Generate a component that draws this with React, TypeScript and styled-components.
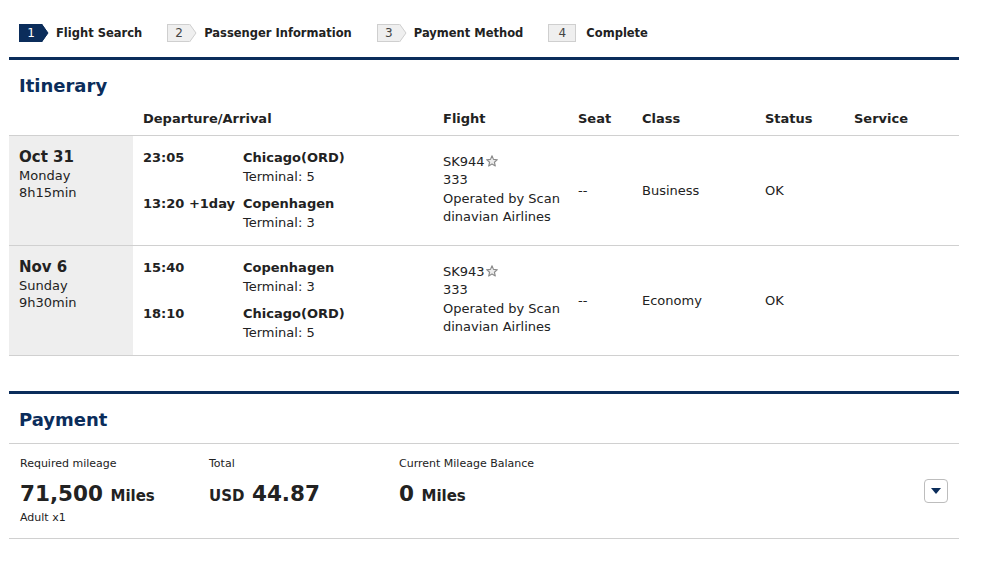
import React from "react";
import styled, { createGlobalStyle } from "styled-components";

const GlobalStyle = createGlobalStyle`
  body {
    margin: 0;
    background: #fff;
    font-family: "DejaVu Sans", "Liberation Sans", sans-serif;
    color: #222;
  }
`;

const Page = styled.div`
  width: 950px;
  margin-left: 9px;
  padding-top: 24px;
`;

const Steps = styled.div`
  display: flex;
  align-items: center;
  padding-left: 10px;
  height: 18px;
  margin-bottom: 15px;
`;

const Step = styled.div`
  display: flex;
  align-items: center;
  margin-right: 25px;
  font-size: 11.5px;
  font-weight: bold;
  color: #222;
`;

const StepNum = styled.div<{ $active?: boolean; $last?: boolean }>`
  position: relative;
  box-sizing: border-box;
  width: ${(p) => (p.$last ? "28px" : "23px")};
  height: 18px;
  display: flex;
  align-items: center;
  justify-content: center;
  font-size: 12px;
  font-weight: normal;
  background: ${(p) => (p.$active ? "#0b2d5b" : "#efefef")};
  color: ${(p) => (p.$active ? "#fff" : "#444")};
  border: 1px solid ${(p) => (p.$active ? "#0b2d5b" : "#cfcfcf")};
  border-right: ${(p) => (p.$last ? undefined : "none")};
  margin-right: ${(p) => (p.$last ? "10px" : "14px")};
`;

const Arrow = styled.svg`
  position: absolute;
  right: -7px;
  top: -1px;
`;

const NavyRule = styled.div`
  height: 3px;
  background: #0b2d5b;
`;

const SectionTitle = styled.h2`
  margin: 0;
  padding: 15px 10px 0;
  height: 40px;
  box-sizing: border-box;
  font-size: 18px;
  font-weight: bold;
  color: #0b2d5b;
`;

const Grid = "124px 10px 100px 200px 135px 64px 123px 89px 1fr";

const HeadRow = styled.div`
  display: grid;
  grid-template-columns: ${Grid};
  height: 36px;
  align-items: center;
  border-bottom: 1px solid #d0d0d0;
  font-size: 13px;
  font-weight: bold;
  padding-top: 2px;
  box-sizing: border-box;
`;

const HeadCell = styled.div<{ $col: number; $span?: number }>`
  grid-column: ${(p) => p.$col} / span ${(p) => p.$span ?? 1};
`;

const Row = styled.div`
  display: grid;
  grid-template-columns: ${Grid};
  height: 109px;
  border-bottom: 1px solid #d0d0d0;
  font-size: 13px;
`;

const DateCell = styled.div`
  background: #eeeeee;
  padding: 11px 10px 0;
  line-height: 17px;
`;

const DateMain = styled.div`
  font-size: 15px;
  font-weight: bold;
  line-height: 20px;
`;

const Segments = styled.div`
  grid-column: 3 / span 2;
  display: flex;
  flex-direction: column;
  gap: 9px;
  padding-top: 13px;
  line-height: 18.5px;
`;

const Segment = styled.div`
  display: grid;
  grid-template-columns: 100px 1fr;
`;

const Bold = styled.div`
  font-weight: bold;
`;

const FlightCell = styled.div`
  grid-column: 5;
  width: 120px;
  word-break: break-all;
  line-height: 18.3px;
  padding-top: 17px;
`;

const MidCell = styled.div<{ $col: number }>`
  grid-column: ${(p) => p.$col};
  align-self: center;
`;

const PaySection = styled.div`
  margin-top: 35px;
`;

const PayTitle = styled(SectionTitle)`
  height: 50px;
  padding-top: 15px;
  border-bottom: 1px solid #d0d0d0;
`;

const PayBody = styled.div`
  display: flex;
  align-items: flex-start;
  height: 95px;
  padding: 13px 11px 0;
  box-sizing: border-box;
  border-bottom: 1px solid #d0d0d0;
`;

const PayCol = styled.div<{ $w: number }>`
  width: ${(p) => p.$w}px;
`;

const Label = styled.div`
  font-size: 11px;
  line-height: 14px;
  margin-bottom: 9px;
`;

const Value = styled.div`
  font-size: 21.5px;
  font-weight: bold;
  line-height: 28px;
`;

const Unit = styled.span`
  font-size: 15px;
`;

const Sub = styled.div`
  font-size: 11px;
  line-height: 14px;
  margin-top: 1px;
`;

const Toggle = styled.button`
  margin-left: auto;
  margin-top: 22px;
  width: 24px;
  height: 24px;
  padding: 0;
  border: 1px solid #bdbdbd;
  border-radius: 4px;
  background: #fff;
  display: flex;
  align-items: center;
  justify-content: center;
`;

const StarIcon = () => (
  <svg width="12" height="12" viewBox="0 0 24 24" style={{ marginLeft: 1, verticalAlign: "-1px" }}>
    <path
      d="M12 1.5l3 7.3 7.8.6-6 5.1 1.9 7.6L12 18l-6.7 4.1 1.9-7.6-6-5.1 7.8-.6z"
      fill="#ececec"
      stroke="#8a8a8a"
      strokeWidth="2.2"
      strokeLinejoin="round"
    />
  </svg>
);

const steps = ["Flight Search", "Passenger Information", "Payment Method", "Complete"];

const itinerary = [
  {
    date: "Oct 31",
    day: "Monday",
    dur: "8h15min",
    segs: [
      { time: "23:05", city: "Chicago(ORD)", term: "Terminal: 5" },
      { time: "13:20 +1day", city: "Copenhagen", term: "Terminal: 3" },
    ],
    flight: "SK944",
    cls: "Business",
  },
  {
    date: "Nov 6",
    day: "Sunday",
    dur: "9h30min",
    segs: [
      { time: "15:40", city: "Copenhagen", term: "Terminal: 3" },
      { time: "18:10", city: "Chicago(ORD)", term: "Terminal: 5" },
    ],
    flight: "SK943",
    cls: "Economy",
  },
];

export default function App() {
  return (
    <>
      <GlobalStyle />
      <Page>
        <Steps>
          {steps.map((s, i) => {
            const last = i === steps.length - 1;
            const active = i === 0;
            return (
              <Step key={s}>
                <StepNum $active={active} $last={last}>
                  {i + 1}
                  {!last && (
                    <Arrow width="8" height="18" viewBox="0 0 8 18">
                      <path
                        d="M0 0 L1 0 L7 9 L1 18 L0 18 Z"
                        fill={active ? "#0b2d5b" : "#efefef"}
                      />
                      <path
                        d="M0.5 0 L7 9 L0.5 18"
                        fill="none"
                        stroke={active ? "#0b2d5b" : "#cfcfcf"}
                        strokeWidth="1"
                      />
                    </Arrow>
                  )}
                </StepNum>
                {s}
              </Step>
            );
          })}
        </Steps>
        <NavyRule />
        <SectionTitle>Itinerary</SectionTitle>
        <HeadRow>
          <HeadCell $col={3} $span={2}>Departure/Arrival</HeadCell>
          <HeadCell $col={5}>Flight</HeadCell>
          <HeadCell $col={6}>Seat</HeadCell>
          <HeadCell $col={7}>Class</HeadCell>
          <HeadCell $col={8}>Status</HeadCell>
          <HeadCell $col={9}>Service</HeadCell>
        </HeadRow>
        {itinerary.map((r) => (
          <Row key={r.flight}>
            <DateCell>
              <DateMain>{r.date}</DateMain>
              <div>{r.day}</div>
              <div>{r.dur}</div>
            </DateCell>
            <Segments>
              {r.segs.map((s) => (
                <Segment key={s.time}>
                  <Bold>{s.time}</Bold>
                  <div>
                    <Bold>{s.city}</Bold>
                    <div>{s.term}</div>
                  </div>
                </Segment>
              ))}
            </Segments>
            <FlightCell>
              <div>
                {r.flight}
                <StarIcon />
              </div>
              <div>333</div>
              <div>Operated by Scandinavian Airlines</div>
            </FlightCell>
            <MidCell $col={6}>--</MidCell>
            <MidCell $col={7}>{r.cls}</MidCell>
            <MidCell $col={8}>OK</MidCell>
          </Row>
        ))}
        <PaySection>
          <NavyRule />
          <PayTitle>Payment</PayTitle>
          <PayBody>
            <PayCol $w={189}>
              <Label>Required mileage</Label>
              <Value>
                71,500 <Unit>Miles</Unit>
              </Value>
              <Sub>Adult x1</Sub>
            </PayCol>
            <PayCol $w={190}>
              <Label>Total</Label>
              <Value>
                <Unit>USD</Unit> 44.87
              </Value>
            </PayCol>
            <PayCol $w={200}>
              <Label>Current Mileage Balance</Label>
              <Value>
                0 <Unit>Miles</Unit>
              </Value>
            </PayCol>
            <Toggle aria-label="expand">
              <svg width="10" height="6" viewBox="0 0 10 6">
                <path d="M0 0 H10 L5 6 Z" fill="#0b2d5b" />
              </svg>
            </Toggle>
          </PayBody>
        </PaySection>
      </Page>
    </>
  );
}
